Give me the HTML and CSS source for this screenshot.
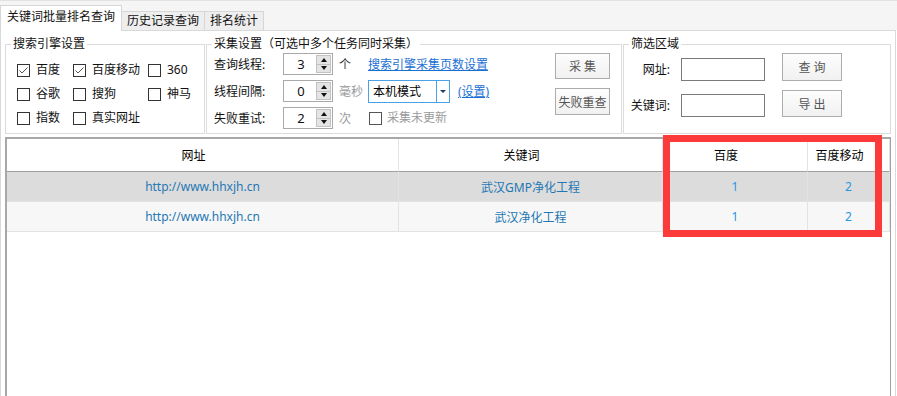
FILE: index.html
```html
<!DOCTYPE html>
<html>

<head>
  <meta charset="UTF-8">
  <title>关键词批量排名查询</title>
  <link rel="stylesheet" href="styles.css">
</head>

<body>
  <div class="tabs">
    <div class="tab active">关键词批量排名查询</div>
    <div class="tab">历史记录查询</div>
    <div class="tab">排名统计</div>
  </div>

  <div class="panel">
    <div class="settings">
      <fieldset class="group engines">
        <legend>搜索引擎设置</legend>
        <div class="checks">
          <label class="check"><span class="box"><svg viewBox="0 0 11 11"><polyline points="1.5,5.5 4,8 9.5,2.5" /></svg></span>百度</label>
          <label class="check"><span class="box"><svg viewBox="0 0 11 11"><polyline points="1.5,5.5 4,8 9.5,2.5" /></svg></span>百度移动</label>
          <label class="check"><span class="box"></span>360</label>
          <label class="check"><span class="box"></span>谷歌</label>
          <label class="check"><span class="box"></span>搜狗</label>
          <label class="check"><span class="box"></span>神马</label>
          <label class="check"><span class="box"></span>指数</label>
          <label class="check"><span class="box"></span>真实网址</label>
        </div>
      </fieldset>

      <fieldset class="group collect">
        <legend>采集设置（可选中多个任务同时采集）</legend>
        <div class="collect-body">
          <div class="fields">
            <div class="field">
              <span class="label">查询线程:</span>
              <span class="spin"><span class="val">3</span><span class="arrows"><i class="up"></i><i class="down"></i></span></span>
              <span class="unit dark">个</span>
              <a class="link">搜索引擎采集页数设置</a>
            </div>
            <div class="field">
              <span class="label">线程间隔:</span>
              <span class="spin"><span class="val">0</span><span class="arrows"><i class="up"></i><i class="down"></i></span></span>
              <span class="unit">毫秒</span>
              <span class="select">本机模式<span class="drop"></span></span>
              <a class="link setup">(设置)</a>
            </div>
            <div class="field">
              <span class="label">失败重试:</span>
              <span class="spin"><span class="val">2</span><span class="arrows"><i class="up"></i><i class="down"></i></span></span>
              <span class="unit">次</span>
              <label class="check muted"><span class="box"></span>采集未更新</label>
            </div>
          </div>
          <div class="actions">
            <button class="btn">采 集</button>
            <button class="btn tall">失败重查</button>
          </div>
        </div>
      </fieldset>

      <fieldset class="group filter">
        <legend>筛选区域</legend>
        <div class="filter-body">
          <div class="frow">
            <span class="flabel">网址:</span>
            <span class="input"></span>
            <button class="btn wide">查 询</button>
          </div>
          <div class="frow">
            <span class="flabel">关键词:</span>
            <span class="input"></span>
            <button class="btn wide short">导 出</button>
          </div>
        </div>
      </fieldset>
    </div>

    <div class="grid">
      <table>
        <colgroup>
          <col class="c-url">
          <col class="c-key">
          <col class="c-bd">
          <col>
        </colgroup>
        <thead>
          <tr>
            <th>网址</th>
            <th>关键词</th>
            <th>百度</th>
            <th>百度移动</th>
          </tr>
        </thead>
        <tbody>
          <tr class="selected">
            <td>http://www.hhxjh.cn</td>
            <td>武汉GMP净化工程</td>
            <td class="num">1</td>
            <td class="num">2</td>
          </tr>
          <tr>
            <td>http://www.hhxjh.cn</td>
            <td>武汉净化工程</td>
            <td class="num">1</td>
            <td class="num">2</td>
          </tr>
        </tbody>
      </table>
    </div>

    <div class="mark"></div>
  </div>
</body>

</html>
```

FILE: styles.css
```css
* {
  box-sizing: border-box;
}

body {
  margin: 0;
  width: 897px;
  height: 396px;
  overflow: hidden;
  font-family: "Noto Sans", "Noto Sans CJK SC", sans-serif;
  font-size: 12px;
  color: #111;
  background: #fff;
}

/* tab strip */
.tabs {
  display: flex;
  align-items: flex-end;
  height: 30px;
  background: #f5f5f5;
  border-top: 1px solid #e2e2e2;
}

.tab {
  height: 19px;
  line-height: 17px;
  padding: 0 5px;
  background: #eeeeee;
  border: 1px solid #d6d6d6;
  border-left: none;
  border-bottom: none;
}

.tab.active {
  height: 26px;
  line-height: 22px;
  padding: 0 6px;
  background: #fff;
  border-left: 1px solid #d6d6d6;
  margin-bottom: -1px;
  position: relative;
  z-index: 1;
}

.panel {
  position: relative;
  width: 896px;
  height: 366px;
  border: 1px solid #d9d9d9;
  border-bottom: none;
  background: #fff;
}

/* group boxes */
.settings {
  display: flex;
  padding: 5px 0 0 4px;
}

.group {
  margin: 0;
  padding: 0;
  min-width: 0;
  height: 98px;
  border: 1px solid #dcdcdc;
}

.group legend {
  margin-left: 5px;
  padding: 0 2px;
  height: 16px;
  line-height: 16px;
}

.engines {
  width: 200px;
}

.collect {
  width: 416px;
  margin-left: 1px;
}

.filter {
  width: 268px;
  margin-left: 1px;
}

/* checkboxes */
.checks {
  display: grid;
  grid-template-columns: 56px 75px auto;
  row-gap: 8px;
  padding: 10px 0 0 11px;
}

.check {
  display: flex;
  align-items: center;
  gap: 6px;
  line-height: 16px;
}

.box {
  width: 13px;
  height: 13px;
  border: 1px solid #333;
  background: #fff;
}

.box svg {
  display: block;
  width: 11px;
  height: 11px;
  fill: none;
  stroke: #555;
  stroke-width: 1;
}

.check.muted {
  margin-left: 1px;
  gap: 5px;
  color: #9a9a9a;
}

.check.muted .box {
  border-color: #555;
}

/* collect settings */
.collect-body {
  display: flex;
  padding: 1px 11px 0 7px;
}

.fields {
  display: flex;
  flex-direction: column;
  gap: 5px;
}

.field {
  display: flex;
  align-items: center;
  height: 22px;
}

.label {
  width: 69px;
}

.spin {
  display: flex;
  width: 50px;
  height: 22px;
  border: 1px solid #a9a9a9;
}

.spin .val {
  flex: 1;
  text-align: center;
  line-height: 20px;
  font-size: 13px;
  padding-left: 2px;
}

.arrows {
  display: flex;
  flex-direction: column;
  width: 15px;
  margin: 1px 1px 1px 0;
}

.arrows i {
  flex: 1;
  display: flex;
  align-items: center;
  justify-content: center;
  background: #e4e4e4;
  border: 1px solid #c2c2c2;
}

.arrows i + i {
  border-top: none;
}

.arrows .up::after {
  content: "";
  border-left: 3px solid transparent;
  border-right: 3px solid transparent;
  border-bottom: 4px solid #111;
}

.arrows .down::after {
  content: "";
  border-left: 3px solid transparent;
  border-right: 3px solid transparent;
  border-top: 4px solid #111;
}

.unit {
  width: 29px;
  margin-left: 6px;
  color: #9a9a9a;
}

.unit.dark {
  color: #333;
}

.link {
  color: #1a6fd4;
  text-decoration: underline;
}

.link.setup {
  margin-left: 8px;
}

.select {
  display: flex;
  align-items: center;
  width: 82px;
  height: 23px;
  padding-left: 4px;
  border: 1px solid #4aa2e6;
  color: #000;
}

.drop {
  display: flex;
  align-items: center;
  justify-content: center;
  margin-left: auto;
  width: 13px;
  height: 100%;
  border-left: 1px solid #4aa2e6;
}

.drop::after {
  content: "";
  border-left: 3px solid transparent;
  border-right: 3px solid transparent;
  border-top: 3px solid #1d3a66;
}

.actions {
  display: flex;
  flex-direction: column;
  gap: 9px;
  margin-left: auto;
}

.btn {
  width: 55px;
  height: 26px;
  padding: 0;
  font-family: inherit;
  font-size: 12px;
  color: #555;
  background: linear-gradient(#fdfdfd, #f1f1f1);
  border: 1px solid #adadad;
}

.btn.tall {
  height: 27px;
}

/* filter area */
.filter-body {
  display: flex;
  flex-direction: column;
  gap: 9px;
  padding-top: 1px;
}

.frow {
  display: flex;
  align-items: flex-end;
}

.flabel {
  width: 46px;
  text-align: right;
  line-height: 23px;
}

.input {
  width: 84px;
  height: 23px;
  margin-left: 11px;
  border: 1px solid #7a7a7a;
  background: #fff;
}

.btn.wide {
  width: 60px;
  height: 28px;
  margin-left: 17px;
}

.btn.short {
  height: 27px;
}

/* result grid */
.grid {
  width: 886px;
  height: 262px;
  margin: 3px 0 0 4px;
  border-left: 2px solid #a8a8a8;
  border-top: 2px solid #a8a8a8;
  border-right: 1px solid #a0a0a0;
}

.grid table {
  width: 883px;
  border-spacing: 0;
  table-layout: fixed;
}

.c-url {
  width: 392px;
}

.c-key {
  width: 264px;
}

.c-bd {
  width: 145px;
}

.grid th {
  height: 33px;
  padding: 0 18px 0 0;
  font-weight: normal;
  color: #000;
  border-bottom: 1px solid #a0a0a0;
  border-right: 1px solid #e3e3e3;
}

.grid td {
  height: 30px;
  padding: 0;
  text-align: center;
  color: #1f78b4;
  background: #f7f7f7;
  border-bottom: 1px solid #e3e3e3;
  border-right: 1px solid #e3e3e3;
}

.grid tr.selected td {
  background: #dcdcdc;
}

.grid td.num {
  color: #2a96e0;
}

/* annotation box */
.mark {
  position: absolute;
  left: 662px;
  top: 104px;
  width: 219px;
  height: 102px;
  border: 7px solid #fc3a3a;
}
```
